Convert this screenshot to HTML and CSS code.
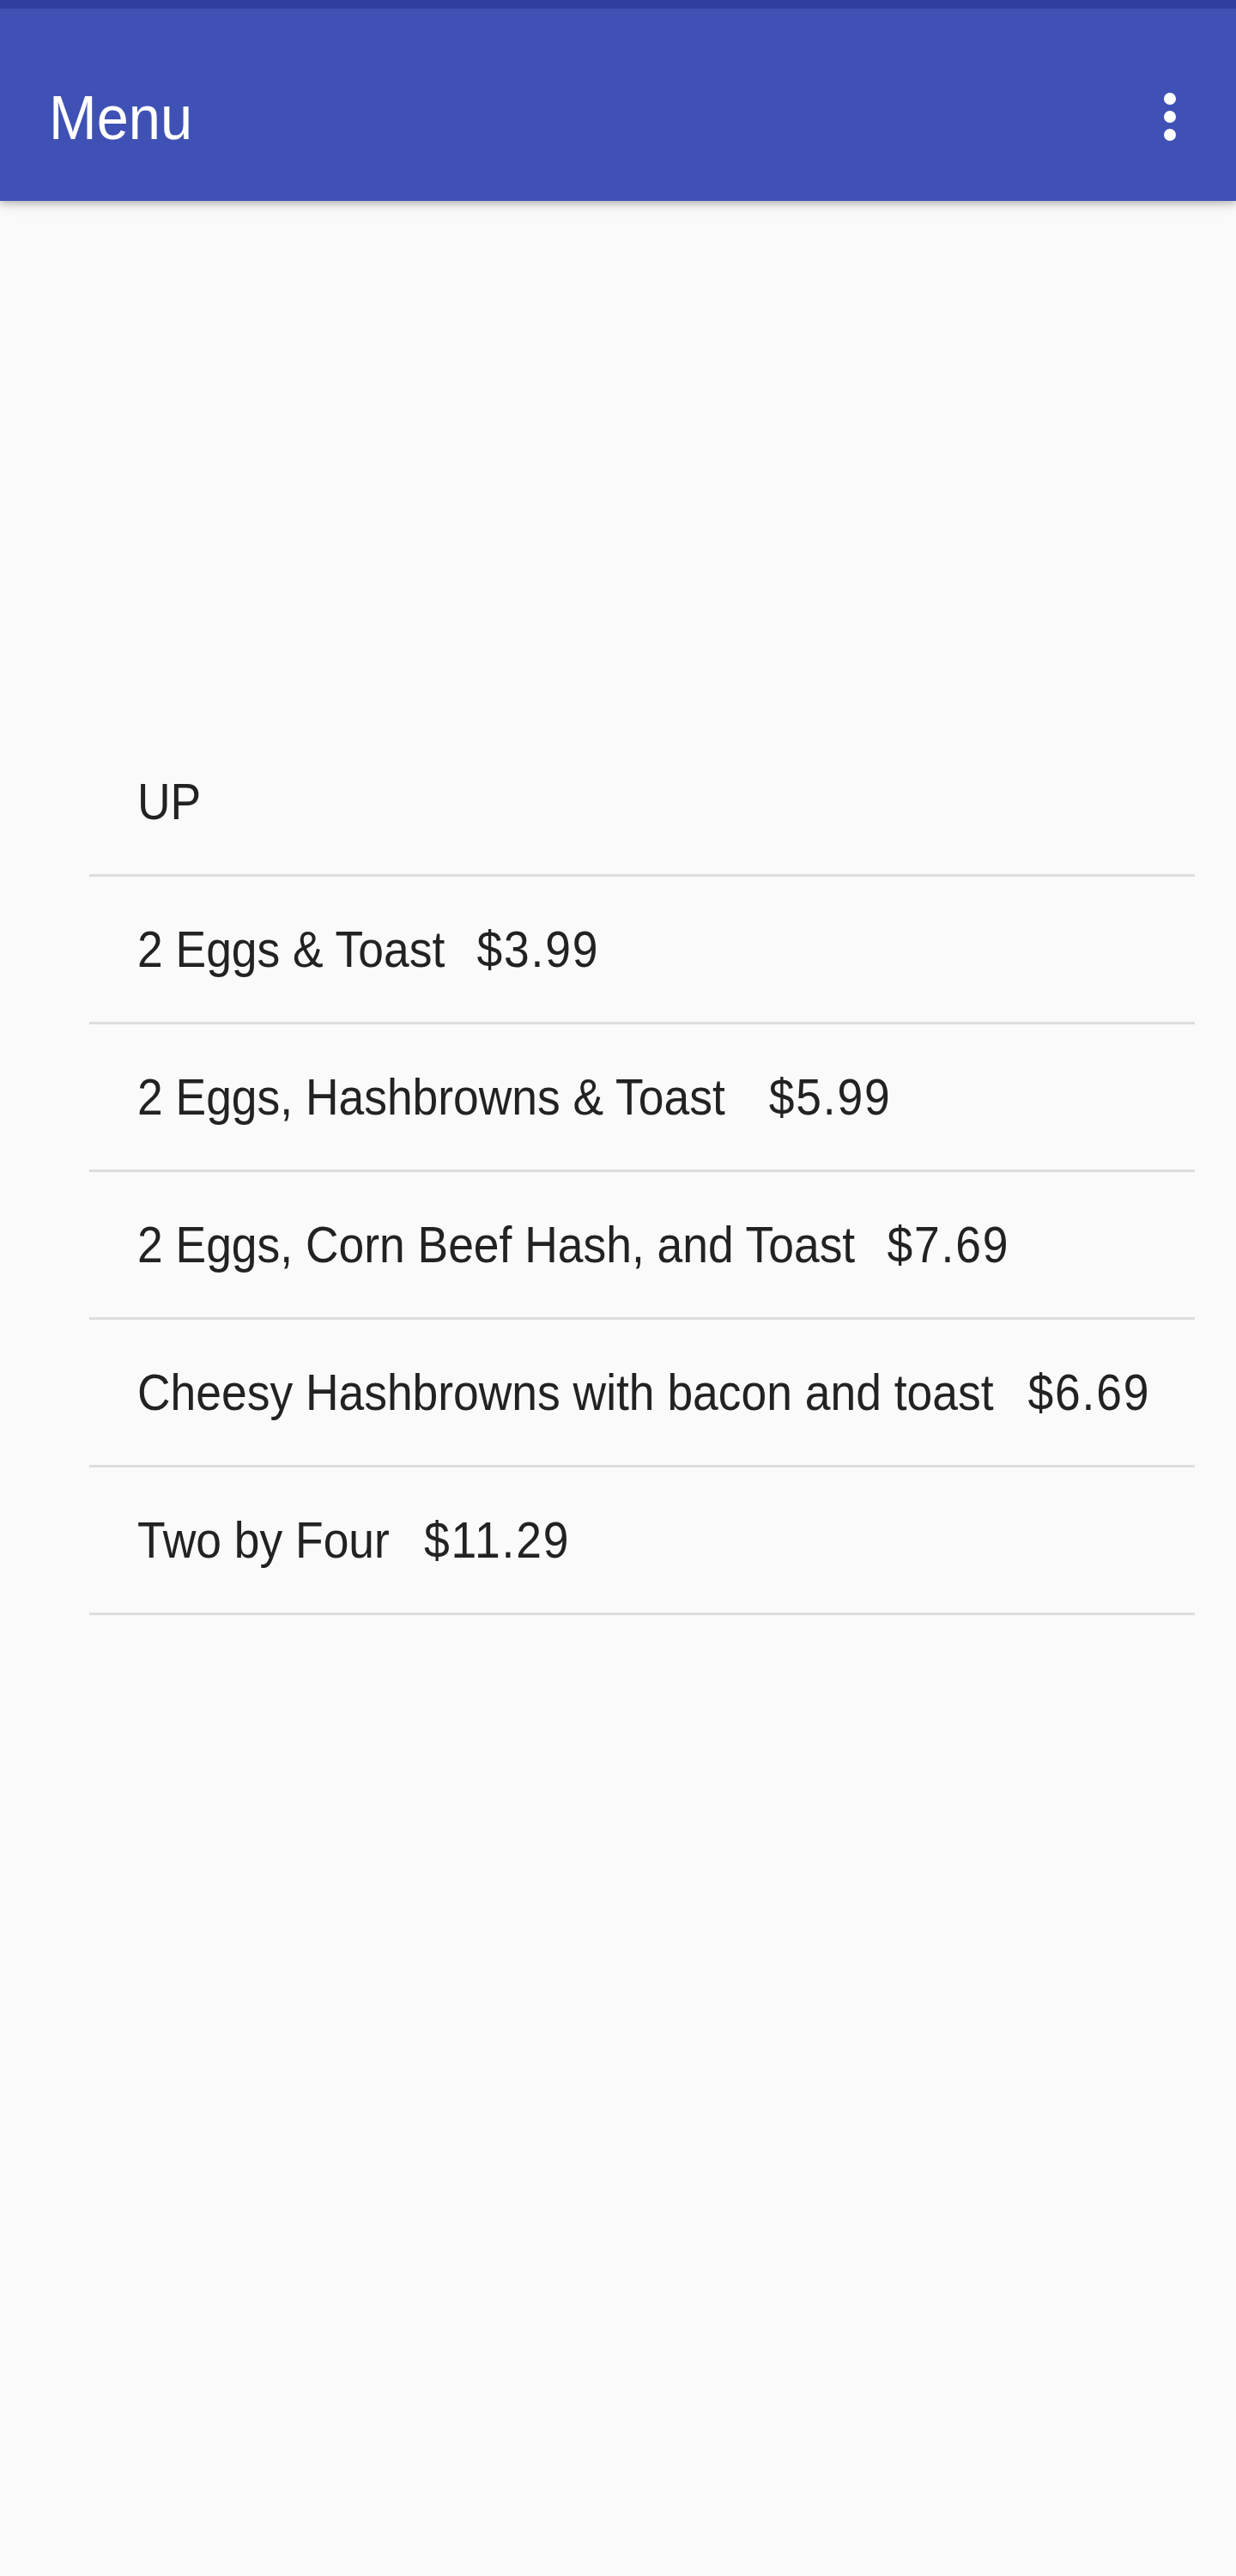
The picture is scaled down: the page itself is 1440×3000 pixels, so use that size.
FILE: index.html
```html
<!DOCTYPE html>
<html lang="en">
<head>
<meta charset="utf-8">
<title>Menu</title>
<link rel="stylesheet" href="styles.css">
</head>
<body>
<header class="appbar">
  <div class="statusbar"></div>
  <div class="toolbar">
    <h1 class="title">Menu</h1>
    <button class="overflow" aria-label="More options">
      <svg width="14" height="56" viewBox="0 0 14 56" aria-hidden="true">
        <circle cx="7" cy="7" r="7" fill="#fff"/>
        <circle cx="7" cy="28" r="7" fill="#fff"/>
        <circle cx="7" cy="49" r="7" fill="#fff"/>
      </svg>
    </button>
  </div>
</header>
<main>
  <ul class="menu-list">
    <li class="item"><span class="item-text"><span class="name">UP</span></span></li>
    <li class="item"><span class="item-text"><span class="name">2 Eggs &amp; Toast</span><span class="price gap-a">$3.99</span></span></li>
    <li class="item"><span class="item-text"><span class="name">2 Eggs, Hashbrowns &amp; Toast</span><span class="price gap-c">$5.99</span></span></li>
    <li class="item"><span class="item-text"><span class="name">2 Eggs, Corn Beef Hash, and Toast</span><span class="price gap-a">$7.69</span></span></li>
    <li class="item"><span class="item-text"><span class="name">Cheesy Hashbrowns with bacon and toast</span><span class="price gap-b">$6.69</span></span></li>
    <li class="item"><span class="item-text"><span class="name">Two by Four</span><span class="price gap-b">$11.29</span></span></li>
  </ul>
</main>
</body>
</html>
```
FILE: styles.css
```css
html, body {
  margin: 0;
  padding: 0;
}
body {
  background: #fafafa;
  font-family: "Liberation Sans", Arial, sans-serif;
  color: #222222;
  min-height: 3000px;
}
.appbar {
  position: relative;
  z-index: 1;
  box-shadow: 0 3px 8px rgba(0, 0, 0, 0.22), 0 6px 16px rgba(0, 0, 0, 0.08);
}
.statusbar {
  height: 10px;
  background: #303f9f;
}
.toolbar {
  height: 196px;
  padding: 28px 70px 0 57px;
  background: #3f51b5;
  display: flex;
  align-items: center;
  justify-content: space-between;
}
.title {
  margin: 3px 0 0 0;
  font-size: 72.6px;
  line-height: 1;
  font-weight: normal;
  color: #ffffff;
  transform: scaleX(0.92);
  transform-origin: left center;
}
.overflow {
  border: 0;
  padding: 0;
  margin: 0;
  background: transparent;
  display: flex;
  line-height: 0;
}
.menu-list {
  list-style: none;
  margin: 615px 48px 0 104px;
  padding: 0;
}
.item {
  height: 167px;
  padding: 2px 0 0 56px;
  display: flex;
  align-items: center;
  border-bottom: 3px solid #dddddd;
}
.item-text {
  display: inline-flex;
  white-space: nowrap;
  font-size: 58.7px;
  line-height: 1;
  transform: scaleX(0.91);
  transform-origin: left center;
}
.price {
  letter-spacing: 2px;
}
.gap-a { margin-left: 41px; }
.gap-b { margin-left: 44px; }
.gap-c { margin-left: 56px; }
```
